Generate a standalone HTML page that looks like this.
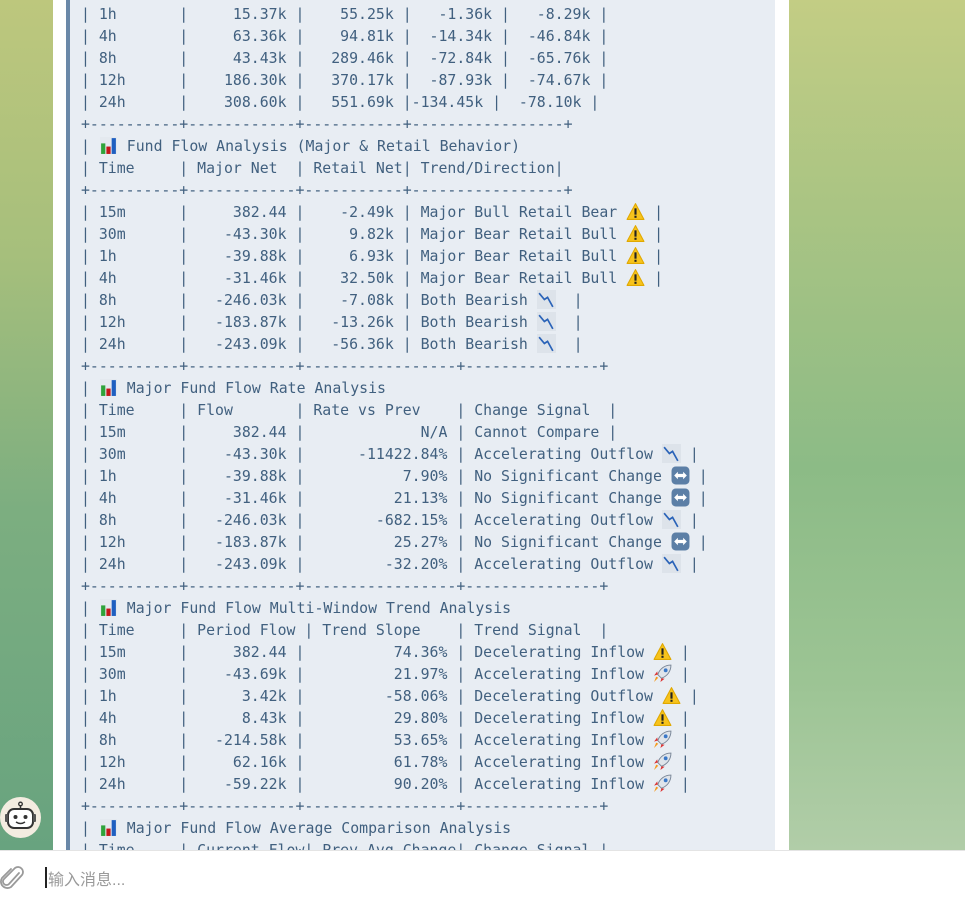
<!DOCTYPE html>
<html><head><meta charset="utf-8">
<style>
*{margin:0;padding:0;box-sizing:border-box}
html,body{width:965px;height:897px;overflow:hidden;background:#fff}
.l{position:absolute;left:0;top:0;width:53px;height:850px;background:linear-gradient(180deg,#bdc77d 0%,#a6bf7c 30%,#7cae80 60%,#68a37f 100%)}
.r{position:absolute;left:789px;top:0;width:176px;height:850px;background:linear-gradient(180deg,#c3cd84 0%,#a9c483 25%,#8cbb86 55%,#9cc494 80%,#b1cda8 100%)}
.p{position:absolute;left:53px;top:0;width:736px;height:850px;background:#fff}
.in{position:absolute;left:66px;top:0;width:709px;height:850px;background:#e8edf3;border-left:4px solid #6a88a8;overflow:hidden}
pre{position:absolute;left:11px;top:3px;font-family:"DejaVu Sans Mono","Liberation Mono",monospace;font-size:14.85px;line-height:22px;color:#41607f;white-space:pre}
.e{display:inline-block;width:19px;height:19px;vertical-align:-4px}
.e svg{width:19px;height:19px;display:block}
.bar{position:absolute;left:0;top:850px;width:965px;height:47px;background:#fff;border-top:1px solid #e4e4e4}
.ph{position:absolute;left:48px;top:866px;font-family:"Liberation Sans","Noto Sans CJK SC",sans-serif;font-size:16px;color:#9a9a9a}
.cur{position:absolute;left:45px;top:867px;width:1.5px;height:21px;background:#222}
.av{position:absolute;left:0;top:797px;width:41px;height:41px;border-radius:50%;background:#f3ece0}
</style></head><body>
<div class="l"></div><div class="r"></div>
<div class="p"></div>
<div class="in"><pre>| 1h       |     15.37k |    55.25k |   -1.36k |   -8.29k |
| 4h       |     63.36k |    94.81k |  -14.34k |  -46.84k |
| 8h       |     43.43k |   289.46k |  -72.84k |  -65.76k |
| 12h      |    186.30k |   370.17k |  -87.93k |  -74.67k |
| 24h      |    308.60k |   551.69k |-134.45k |  -78.10k |
+----------+------------+-----------+-----------------+
| <span class="e"><svg viewBox="0 0 18 18"><rect x="1" y="1" width="16" height="16" fill="#e4e9ef"/><rect x="2" y="7" width="4" height="10" fill="#2fa33a"/><rect x="7" y="10" width="4" height="7" fill="#c4171b"/><rect x="12" y="2" width="4" height="15" fill="#1f5fc0"/></svg></span> Fund Flow Analysis (Major &amp; Retail Behavior)
| Time     | Major Net  | Retail Net| Trend/Direction|
+----------+------------+-----------+-----------------+
| 15m      |     382.44 |    -2.49k | Major Bull Retail Bear <span class="e"><svg viewBox="0 0 18 18"><path d="M9 1.5L17 16.5H1Z" fill="#f7c31c" stroke="#e0a800" stroke-width="1" stroke-linejoin="round"/><rect x="8" y="6" width="2" height="6" fill="#222"/><rect x="8" y="13" width="2" height="2" fill="#222"/></svg></span> |
| 30m      |    -43.30k |     9.82k | Major Bear Retail Bull <span class="e"><svg viewBox="0 0 18 18"><path d="M9 1.5L17 16.5H1Z" fill="#f7c31c" stroke="#e0a800" stroke-width="1" stroke-linejoin="round"/><rect x="8" y="6" width="2" height="6" fill="#222"/><rect x="8" y="13" width="2" height="2" fill="#222"/></svg></span> |
| 1h       |    -39.88k |     6.93k | Major Bear Retail Bull <span class="e"><svg viewBox="0 0 18 18"><path d="M9 1.5L17 16.5H1Z" fill="#f7c31c" stroke="#e0a800" stroke-width="1" stroke-linejoin="round"/><rect x="8" y="6" width="2" height="6" fill="#222"/><rect x="8" y="13" width="2" height="2" fill="#222"/></svg></span> |
| 4h       |    -31.46k |    32.50k | Major Bear Retail Bull <span class="e"><svg viewBox="0 0 18 18"><path d="M9 1.5L17 16.5H1Z" fill="#f7c31c" stroke="#e0a800" stroke-width="1" stroke-linejoin="round"/><rect x="8" y="6" width="2" height="6" fill="#222"/><rect x="8" y="13" width="2" height="2" fill="#222"/></svg></span> |
| 8h       |   -246.03k |    -7.08k | Both Bearish <span class="e"><svg viewBox="0 0 18 18"><rect x="0" y="0" width="18" height="18" fill="#dde3ea"/><path d="M2 3L7 9L10 7L15 16" fill="none" stroke="#2a63b8" stroke-width="1.6"/></svg></span>  |
| 12h      |   -183.87k |   -13.26k | Both Bearish <span class="e"><svg viewBox="0 0 18 18"><rect x="0" y="0" width="18" height="18" fill="#dde3ea"/><path d="M2 3L7 9L10 7L15 16" fill="none" stroke="#2a63b8" stroke-width="1.6"/></svg></span>  |
| 24h      |   -243.09k |   -56.36k | Both Bearish <span class="e"><svg viewBox="0 0 18 18"><rect x="0" y="0" width="18" height="18" fill="#dde3ea"/><path d="M2 3L7 9L10 7L15 16" fill="none" stroke="#2a63b8" stroke-width="1.6"/></svg></span>  |
+----------+------------+-----------------+---------------+
| <span class="e"><svg viewBox="0 0 18 18"><rect x="1" y="1" width="16" height="16" fill="#e4e9ef"/><rect x="2" y="7" width="4" height="10" fill="#2fa33a"/><rect x="7" y="10" width="4" height="7" fill="#c4171b"/><rect x="12" y="2" width="4" height="15" fill="#1f5fc0"/></svg></span> Major Fund Flow Rate Analysis
| Time     | Flow       | Rate vs Prev    | Change Signal  |
| 15m      |     382.44 |             N/A | Cannot Compare |
| 30m      |    -43.30k |      -11422.84% | Accelerating Outflow <span class="e"><svg viewBox="0 0 18 18"><rect x="0" y="0" width="18" height="18" fill="#dde3ea"/><path d="M2 3L7 9L10 7L15 16" fill="none" stroke="#2a63b8" stroke-width="1.6"/></svg></span> |
| 1h       |    -39.88k |           7.90% | No Significant Change <span class="e"><svg viewBox="0 0 18 18"><rect x="0.5" y="0.5" width="17" height="17" rx="4" fill="#5c7fa6"/><path d="M3 9L6.5 5.5V7.5H11.5V5.5L15 9L11.5 12.5V10.5H6.5V12.5Z" fill="#fff"/></svg></span> |
| 4h       |    -31.46k |          21.13% | No Significant Change <span class="e"><svg viewBox="0 0 18 18"><rect x="0.5" y="0.5" width="17" height="17" rx="4" fill="#5c7fa6"/><path d="M3 9L6.5 5.5V7.5H11.5V5.5L15 9L11.5 12.5V10.5H6.5V12.5Z" fill="#fff"/></svg></span> |
| 8h       |   -246.03k |        -682.15% | Accelerating Outflow <span class="e"><svg viewBox="0 0 18 18"><rect x="0" y="0" width="18" height="18" fill="#dde3ea"/><path d="M2 3L7 9L10 7L15 16" fill="none" stroke="#2a63b8" stroke-width="1.6"/></svg></span> |
| 12h      |   -183.87k |          25.27% | No Significant Change <span class="e"><svg viewBox="0 0 18 18"><rect x="0.5" y="0.5" width="17" height="17" rx="4" fill="#5c7fa6"/><path d="M3 9L6.5 5.5V7.5H11.5V5.5L15 9L11.5 12.5V10.5H6.5V12.5Z" fill="#fff"/></svg></span> |
| 24h      |   -243.09k |         -32.20% | Accelerating Outflow <span class="e"><svg viewBox="0 0 18 18"><rect x="0" y="0" width="18" height="18" fill="#dde3ea"/><path d="M2 3L7 9L10 7L15 16" fill="none" stroke="#2a63b8" stroke-width="1.6"/></svg></span> |
+----------+------------+-----------------+---------------+
| <span class="e"><svg viewBox="0 0 18 18"><rect x="1" y="1" width="16" height="16" fill="#e4e9ef"/><rect x="2" y="7" width="4" height="10" fill="#2fa33a"/><rect x="7" y="10" width="4" height="7" fill="#c4171b"/><rect x="12" y="2" width="4" height="15" fill="#1f5fc0"/></svg></span> Major Fund Flow Multi-Window Trend Analysis
| Time     | Period Flow | Trend Slope    | Trend Signal  |
| 15m      |     382.44 |          74.36% | Decelerating Inflow <span class="e"><svg viewBox="0 0 18 18"><path d="M9 1.5L17 16.5H1Z" fill="#f7c31c" stroke="#e0a800" stroke-width="1" stroke-linejoin="round"/><rect x="8" y="6" width="2" height="6" fill="#222"/><rect x="8" y="13" width="2" height="2" fill="#222"/></svg></span> |
| 30m      |    -43.69k |          21.97% | Accelerating Inflow <span class="e"><svg viewBox="0 0 18 18"><path d="M17 1C11 1 6.5 4.5 4.5 10L8 13.5C13.5 11.5 17 7 17 1Z" fill="#dfe4ea" stroke="#7a8798" stroke-width="0.9"/><circle cx="12" cy="6" r="1.8" fill="#3a78c8"/><path d="M4.5 10L1 11L4 7Z M8 13.5L7 17L11 14Z" fill="#d33"/><path d="M5 13L1 17L3 12Z" fill="#f59a1b"/></svg></span> |
| 1h       |      3.42k |         -58.06% | Decelerating Outflow <span class="e"><svg viewBox="0 0 18 18"><path d="M9 1.5L17 16.5H1Z" fill="#f7c31c" stroke="#e0a800" stroke-width="1" stroke-linejoin="round"/><rect x="8" y="6" width="2" height="6" fill="#222"/><rect x="8" y="13" width="2" height="2" fill="#222"/></svg></span> |
| 4h       |      8.43k |          29.80% | Decelerating Inflow <span class="e"><svg viewBox="0 0 18 18"><path d="M9 1.5L17 16.5H1Z" fill="#f7c31c" stroke="#e0a800" stroke-width="1" stroke-linejoin="round"/><rect x="8" y="6" width="2" height="6" fill="#222"/><rect x="8" y="13" width="2" height="2" fill="#222"/></svg></span> |
| 8h       |   -214.58k |          53.65% | Accelerating Inflow <span class="e"><svg viewBox="0 0 18 18"><path d="M17 1C11 1 6.5 4.5 4.5 10L8 13.5C13.5 11.5 17 7 17 1Z" fill="#dfe4ea" stroke="#7a8798" stroke-width="0.9"/><circle cx="12" cy="6" r="1.8" fill="#3a78c8"/><path d="M4.5 10L1 11L4 7Z M8 13.5L7 17L11 14Z" fill="#d33"/><path d="M5 13L1 17L3 12Z" fill="#f59a1b"/></svg></span> |
| 12h      |     62.16k |          61.78% | Accelerating Inflow <span class="e"><svg viewBox="0 0 18 18"><path d="M17 1C11 1 6.5 4.5 4.5 10L8 13.5C13.5 11.5 17 7 17 1Z" fill="#dfe4ea" stroke="#7a8798" stroke-width="0.9"/><circle cx="12" cy="6" r="1.8" fill="#3a78c8"/><path d="M4.5 10L1 11L4 7Z M8 13.5L7 17L11 14Z" fill="#d33"/><path d="M5 13L1 17L3 12Z" fill="#f59a1b"/></svg></span> |
| 24h      |    -59.22k |          90.20% | Accelerating Inflow <span class="e"><svg viewBox="0 0 18 18"><path d="M17 1C11 1 6.5 4.5 4.5 10L8 13.5C13.5 11.5 17 7 17 1Z" fill="#dfe4ea" stroke="#7a8798" stroke-width="0.9"/><circle cx="12" cy="6" r="1.8" fill="#3a78c8"/><path d="M4.5 10L1 11L4 7Z M8 13.5L7 17L11 14Z" fill="#d33"/><path d="M5 13L1 17L3 12Z" fill="#f59a1b"/></svg></span> |
+----------+------------+-----------------+---------------+
| <span class="e"><svg viewBox="0 0 18 18"><rect x="1" y="1" width="16" height="16" fill="#e4e9ef"/><rect x="2" y="7" width="4" height="10" fill="#2fa33a"/><rect x="7" y="10" width="4" height="7" fill="#c4171b"/><rect x="12" y="2" width="4" height="15" fill="#1f5fc0"/></svg></span> Major Fund Flow Average Comparison Analysis
| Time     | Current Flow| Prev Avg Change| Change Signal |</pre></div>
<div class="av"><svg width="41" height="41" viewBox="0 0 41 41"><line x1="20.5" y1="8" x2="20.5" y2="12" stroke="#333" stroke-width="1.5"/><circle cx="20.5" cy="7" r="1.8" fill="none" stroke="#333" stroke-width="1.3"/><rect x="8" y="12" width="25" height="19" rx="6" fill="#fff" stroke="#333" stroke-width="2"/><rect x="5" y="17" width="3" height="8" rx="1" fill="#555"/><rect x="33" y="17" width="3" height="8" rx="1" fill="#555"/><circle cx="15.5" cy="20" r="2" fill="#333"/><circle cx="25.5" cy="20" r="2" fill="#333"/><path d="M16 25Q20.5 28 25 25" fill="none" stroke="#333" stroke-width="1.5"/></svg></div>
<div class="bar"></div>
<svg style="position:absolute;left:0;top:864px" width="26" height="28" viewBox="0 0 26 28"><path d="M19 9L9 20a3.5 3.5 0 0 1-5-5L15 4a5 5 0 0 1 7 7L11 23a6.5 6.5 0 0 1-9-9L11 5" fill="none" stroke="#9a9a9a" stroke-width="1.8" stroke-linecap="round"/></svg>
<div class="cur"></div>
<div class="ph">输入消息...</div>
</body></html>
